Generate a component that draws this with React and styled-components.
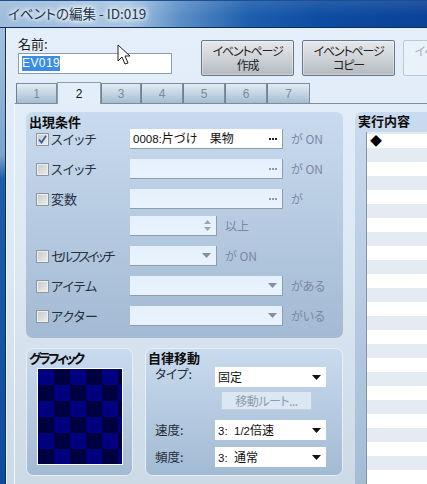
import React from "react";
import styled, { createGlobalStyle } from "styled-components";

const Global = createGlobalStyle`
  html, body { margin: 0; padding: 0; background: #dfeaf6; }
  * { box-sizing: border-box; }
  body { font-family: "Noto Sans CJK JP", "Liberation Sans", sans-serif; font-feature-settings: "palt"; font-size: 13px; color: #1a1a1a; }
`;

const Win = styled.div`
  position: relative; width: 427px; height: 484px; overflow: hidden;
  display: flex; flex-direction: column;
`;
const TitleBar = styled.div`
  height: 28px; flex: none; display: flex; align-items: center; padding: 0 0 3px 8px;
  background:
    linear-gradient(180deg, rgba(255,255,255,.10) 0, rgba(255,255,255,0) 60%),
    linear-gradient(90deg, #9dbcdc 0, #a9c6e2 30%, #5d8fc6 42%, #1d5fae 58%, #0d4ca2 75%, #0a4297 100%);
  border-top: 1px solid #1d4f8f; border-bottom: 1px solid #0b2c5c;
`;
const TitleText = styled.div`
  font-size: 13.5px; color: #20344c; line-height: 16px;
  text-shadow: 0 0 5px #fff, 0 0 5px #fff, 0 0 8px #fff;
`;
const Body = styled.div`flex: 1; min-height: 0; display: flex;`;
const FrameEdge = styled.div`
  width: 6px; flex: none; border-right: 1px solid #0d2f5d;
  background: linear-gradient(180deg, #a5c2de 0, #7ba3cc 28%, #1e5dab 33%, #0d4c9f 100%);
`;
const Client = styled.div`
  flex: 1; min-width: 0; overflow: hidden; display: flex; flex-direction: column;
  background: linear-gradient(180deg, #e4effb 0, #dce8f4 50%, #ccdae6 100%);
  border-left: 1px solid #f1f6fc;
`;
const TopRow = styled.div`height: 55px; flex: none; display: flex; padding: 9px 0 0 11px;`;
const NameBlock = styled.div`width: 154px; flex: none; margin-right: 29px; display: flex; flex-direction: column;`;
const NameLabel = styled.div`height: 16px; line-height: 14px; font-size: 13px;`;
const NameInput = styled.div`
  height: 21px; border: 1px solid #8f9eac; background: #fff; padding: 2px 0 0 3px;
  font: 12px/15px "Liberation Sans", sans-serif; letter-spacing: .4px;
`;
const Selected = styled.span`display: inline-block; height: 15px; background: #3a8ce6; color: #fff;`;
const PageButton = styled.div`
  width: 93px; height: 36px; flex: none; margin: 3px 8px 0 0; border-radius: 2px;
  display: flex; align-items: center; justify-content: center;
  border: 1px solid ${p => (p.$off ? "#bcc8d4" : "#66788a")};
  color: ${p => (p.$off ? "#a4b0bd" : "#222")};
  background: ${p => (p.$off ? "#e9f1fa" : "linear-gradient(180deg, #e6e9ec 0, #cfd3d7 50%, #b4babf 100%)")};
  box-shadow: ${p => (p.$off ? "none" : "inset 0 0 0 1px rgba(255,255,255,.35)")};
`;
const ButtonLabel = styled.div`font-size: 12px; line-height: 14px; letter-spacing: -1.2px; white-space: pre; text-align: center;`;
const TabStrip = styled.div`height: 20px; flex: none; display: flex; padding-left: 9px; position: relative; z-index: 2;`;
const Tab = styled.div`
  width: ${p => p.$w}px; flex: none; display: flex; align-items: center; justify-content: center;
  font: 12px "Liberation Sans", sans-serif;
  border: 1px solid #7d8d9c; border-bottom: none;
  ${p => (p.$active
    ? `height: 22px; margin-top: -1px; background: #e3eefa; color: #111; border-color: #8d9cab; border-top-left-radius: 1px; border-top-right-radius: 1px;`
    : `height: 20px; color: #7b8b9a; background: linear-gradient(180deg, #e2ecf4 0, #c7d7e4 45%, #a5bdd1 100%); border-left-color: #6f8192;`)}
`;
const TabPanel = styled.div`
  flex: 1; min-height: 0; margin-left: 7px; padding: 8px 0 0 11px;
  display: flex; gap: 12px;
  border-top: 1px solid #7d8d9c; border-left: 1px solid #f3f8fd;
`;
const LeftColumn = styled.div`width: 317px; flex: none; display: flex; flex-direction: column; gap: 10px;`;
const GroupBox = styled.div`
  border-radius: 7px; flex: none;
  background: linear-gradient(180deg, #c9dbee 0, #a2bad3 100%);
  ${p => p.$w ? `width: ${p.$w}px;` : ""}
  ${p => p.$h ? `height: ${p.$h}px;` : ""}
  ${p => p.$ring ? "box-shadow: inset 0 0 0 1px #e6eff7;" : ""}
`;
const Heading = styled.div`
  height: 17px; padding: ${p => p.$top ?? 0}px 0 0 3px;
  font-size: 13px; line-height: 15px; font-weight: 700; color: #0c0c0c; white-space: nowrap;
  letter-spacing: ${p => p.$squeeze ?? 0}px;
`;
const Row = styled.div`
  height: 20px; display: flex; align-items: center; padding-left: 10px;
  margin-bottom: ${p => p.$after ?? 10}px;
`;
const LabelCell = styled.div`width: 94px; flex: none; display: flex; align-items: center; gap: 2px; font-size: 13px; line-height: 16px; white-space: nowrap; color: #26313f;`;
const Squeezed = styled.span`letter-spacing: -2.7px;`;
const Box = styled.div`
  width: 13px; height: 13px; flex: none; border: 1px solid #8d95a1; display: flex; align-items: center; justify-content: center;
  background: linear-gradient(135deg, #c4c9cc 0, #e7e8e4 80%);
  box-shadow: inset 0 0 0 1px #eef0f0;
`;
const Field = styled.div`
  width: ${p => p.$w}px; height: 20px; flex: none; display: flex; align-items: center; justify-content: space-between;
  padding: 0 5px 0 3px; border-bottom: 1px solid #8d9dac; border-right: 1px solid #8d9dac;
  background: ${p => (p.$on ? "#fff" : "linear-gradient(180deg, #e4f0fc 0, #eaf3fd 100%)")};
  font-size: 12px; line-height: 16px; color: #111; font-feature-settings: normal;
`;
const Latin = styled.span`font: 11.5px/16px "Liberation Sans", sans-serif; white-space: pre;`;
const Dots = styled.span`display: flex; gap: 1px;`;
const Dot = styled.i`width: 2px; height: 2px; display: block; background: ${p => (p.$on ? "#222" : "#8e97a4")};`;
const Suffix = styled.div`margin-left: 8px; font-size: 12px; line-height: 16px; color: #7b87a4;`;
const BottomRow = styled.div`display: flex; gap: 12px;`;
const Preview = styled.div`
  width: 86px; height: 97px; margin: 3px 0 0 11px; border: 1px solid #fff;
  background: repeating-conic-gradient(#000040 0 25%, #000080 0 50%) 0 0 / 32px 32px;
`;
const MoveRow = styled.div`
  height: 20px; display: flex; align-items: center; padding-left: 10px; margin-top: ${p => p.$top}px;
`;
const MoveLabel = styled.div`width: 60px; flex: none; font-size: 12.5px; line-height: 16px; color: #1f2b3a; position: relative; top: ${p => p.$lift ? -3 : 0}px;`;
const Select = styled.div`
  width: 111px; height: 20px; display: flex; align-items: center; justify-content: space-between; padding: 0 5px 0 3px;
  background: #fff; font-size: 12px; line-height: 16px; color: #111; font-feature-settings: normal;
`;
const RouteButton = styled.div`
  width: 91px; height: 19px; margin: 4px 0 0 76px; display: flex; align-items: center; justify-content: center;
  background: #dbe7f3; border: 1px solid #c2d0dd; color: #8f9cad; font-size: 12px; line-height: 16px; letter-spacing: -.5px;
`;
const RightColumn = styled.div`
  width: 90px; flex: none; height: 400px; border-radius: 7px 0 0 0;
  background: linear-gradient(180deg, #c9dbee 0, #a2bad3 100%);
  display: flex; flex-direction: column;
`;
const ListBox = styled.div`
  flex: 1; margin: 3px 0 0 11px; border-left: 1px solid #8194a8; padding: 2px 0 0 3px;
  background: repeating-linear-gradient(180deg, #fff 0, #fff 14px, #e4ebf2 14px, #e4ebf2 28px);
  background-position: 0 2px; font-size: 12px; line-height: 14px; color: #000;
`;
const Cursor = styled.svg`position: absolute; left: 117px; top: 44px;`;

const Arrow = ({ on }) => (
  <svg width="9" height="5" viewBox="0 0 9 5"><path d="M0 0h9L4.500 5z" fill={on ? "#111" : "#838ea0"} /></svg>
);
const Ellipsis = ({ on }) => <Dots><Dot $on={on} /><Dot $on={on} /><Dot $on={on} /></Dots>;
const Check = ({ on }) => (
  <Box>{on && <svg width="9" height="9" viewBox="0 0 9 9"><path d="M1 4.500 3.500 7.500 8 .8" fill="none" stroke="#3b5b9d" strokeWidth="1.8" /></svg>}</Box>
);
const Spinner = () => (
  <svg width="7" height="11" viewBox="0 0 7 11"><path d="M3.500 0 7 4H0zM0 7h7l-3.500 4z" fill="#9aa5b2" /></svg>
);

const tabs = [[1, 41], [2, 44], [3, 40], [4, 42], [5, 42], [6, 42], [7, 43]];

export default function App() {
  return (
    <Win>
      <Global />
      <TitleBar><TitleText>イベントの編集 - ID:019</TitleText></TitleBar>
      <Body>
        <FrameEdge />
        <Client>
          <TopRow>
            <NameBlock>
              <NameLabel>名前:</NameLabel>
              <NameInput><Selected>EV019</Selected></NameInput>
            </NameBlock>
            <PageButton><ButtonLabel>{"イベントページ\n作成"}</ButtonLabel></PageButton>
            <PageButton><ButtonLabel>{"イベントページ\nコピー"}</ButtonLabel></PageButton>
            <PageButton $off><ButtonLabel>{"イベントページ\n貼り付け"}</ButtonLabel></PageButton>
          </TopRow>
          <TabStrip>
            {tabs.map(([n, w]) => <Tab key={n} $w={w} $active={n === 2}>{n}</Tab>)}
          </TabStrip>
          <TabPanel>
            <LeftColumn>
              <GroupBox $h={226}>
                <Heading $top={2}>出現条件</Heading>
                <Row>
                  <LabelCell><Check on />スイッチ</LabelCell>
                  <Field $w={153} $on><span><Latin>0008:</Latin>片づけ　果物</span><Ellipsis on /></Field>
                  <Suffix>が ON</Suffix>
                </Row>
                <Row>
                  <LabelCell><Check />スイッチ</LabelCell>
                  <Field $w={153}><span /><Ellipsis /></Field>
                  <Suffix>が ON</Suffix>
                </Row>
                <Row $after={7}>
                  <LabelCell><Check />変数</LabelCell>
                  <Field $w={153}><span /><Ellipsis /></Field>
                  <Suffix>が</Suffix>
                </Row>
                <Row>
                  <LabelCell />
                  <Field $w={87}><span /><Spinner /></Field>
                  <Suffix>以上</Suffix>
                </Row>
                <Row>
                  <LabelCell><Check /><Squeezed>セルフスイッチ</Squeezed></LabelCell>
                  <Field $w={87}><span /><Arrow /></Field>
                  <Suffix>が ON</Suffix>
                </Row>
                <Row>
                  <LabelCell><Check />アイテム</LabelCell>
                  <Field $w={153}><span /><Arrow /></Field>
                  <Suffix>がある</Suffix>
                </Row>
                <Row>
                  <LabelCell><Check />アクター</LabelCell>
                  <Field $w={153}><span /><Arrow /></Field>
                  <Suffix>がいる</Suffix>
                </Row>
              </GroupBox>
              <BottomRow>
                <GroupBox $w={107} $h={128} $ring>
                  <Heading $top={2} $squeeze={-2.5}>グラフィック</Heading>
                  <Preview />
                </GroupBox>
                <GroupBox $w={198} $h={128} $ring>
                  <Heading $top={2}>自律移動</Heading>
                  <MoveRow $top={2}><MoveLabel $lift>タイプ:</MoveLabel><Select>固定<Arrow on /></Select></MoveRow>
                  <RouteButton>移動ルート...</RouteButton>
                  <MoveRow $top={10}><MoveLabel>速度:</MoveLabel><Select><span><Latin>{"3:  1/2"}</Latin>倍速</span><Arrow on /></Select></MoveRow>
                  <MoveRow $top={7}><MoveLabel>頻度:</MoveLabel><Select><span><Latin>{"3:  "}</Latin>通常</span><Arrow on /></Select></MoveRow>
                </GroupBox>
              </BottomRow>
            </LeftColumn>
            <RightColumn>
              <Heading $top={1}>実行内容</Heading>
              <ListBox>◆</ListBox>
            </RightColumn>
          </TabPanel>
        </Client>
      </Body>
      <Cursor width="16" height="24" viewBox="0 0 16 24">
        <path d="M1 1v16l4-4 3 7 3-1-3-7h5z" fill="#fff" stroke="#222" strokeWidth="1" strokeLinejoin="round" />
      </Cursor>
    </Win>
  );
}
